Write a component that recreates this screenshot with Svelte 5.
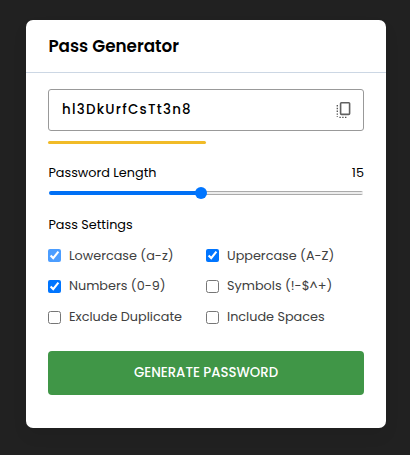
<script>
  let length = $state(15);
  let options = $state([
    { id: 'lower', label: 'Lowercase (a-z)', checked: true, soft: true },
    { id: 'upper', label: 'Uppercase (A-Z)', checked: true },
    { id: 'numbers', label: 'Numbers (0-9)', checked: true },
    { id: 'symbols', label: 'Symbols (!-$^+)', checked: false },
    { id: 'exclude', label: 'Exclude Duplicate', checked: false },
    { id: 'spaces', label: 'Include Spaces', checked: false }
  ]);
  const fill = $derived(((length - 1) / 29) * 100);
</script>

<main>
  <section class="card">
    <h1>Pass Generator</h1>
    <div class="body">
      <div class="field">
        <span class="password">hl3DkUrfCsTt3n8</span>
        <svg class="copy" width="15" height="18" viewBox="0 0 15 18" fill="none">
          <rect x="4.6" y="1.75" width="9" height="11.6" rx="0.8" stroke="#606060" stroke-width="1.6" />
          <path d="M1.3 4v12" stroke="#505050" stroke-width="1.3" stroke-dasharray="1.4 1.4" />
          <path d="M3.4 16.3h8" stroke="#505050" stroke-width="1.3" stroke-dasharray="1.4 1.4" />
        </svg>
      </div>
      <div class="strength"></div>
      <div class="length-row">
        <label for="length">Password Length</label>
        <span>{length}</span>
      </div>
      <input id="length" class="range" type="range" min="1" max="30" bind:value={length} style:--fill="{fill}%" />
      <p class="title">Pass Settings</p>
      <div class="options">
        {#each options as o (o.id)}
          <label class="option" class:soft={o.soft}>
            <input type="checkbox" bind:checked={o.checked} />
            <span>{o.label}</span>
          </label>
        {/each}
      </div>
      <button>GENERATE PASSWORD</button>
    </div>
  </section>
</main>

<style>
  :global(body) { background: #212121; }
  main {
    height: 455px;
    box-sizing: border-box;
    padding: 20px 24px 0 26px;
    background: #212121;
    font-family: Poppins, Inter, sans-serif;
    color: #000;
  }
  .card {
    height: 408px;
    border-radius: 7px;
    background: #fff;
    box-shadow: 0 8px 16px rgba(0, 0, 0, 0.06);
  }
  h1 {
    box-sizing: border-box;
    height: 53px;
    margin: 0;
    padding-left: 22.4px;
    border-bottom: 1px solid #ccd7e4;
    font-size: 16.8px;
    line-height: 53px;
    font-weight: 600;
  }
  .body {
    display: flex;
    flex-direction: column;
    padding: 16px 22px 0;
  }
  .field {
    box-sizing: border-box;
    height: 42px;
    display: flex;
    align-items: center;
    justify-content: space-between;
    padding: 0 12px 0 13px;
    border: 1px solid #999;
    border-radius: 3px;
  }
  .password {
    font-size: 13.4px;
    font-weight: 500;
    letter-spacing: 1.25px;
  }
  .copy { display: block; }
  .strength {
    width: 158px;
    height: 3px;
    margin-top: 10px;
    border-radius: 2px;
    background: #f1bb28;
  }
  .length-row {
    display: flex;
    justify-content: space-between;
    height: 20px;
    margin-top: 19px;
    padding-left: 0.4px;
    font-size: 12.8px;
    line-height: 20px;
  }
  .range {
    appearance: none;
    width: 316px;
    height: 12px;
    margin: 4px 0 0;
    background: transparent;
  }
  .range::-webkit-slider-runnable-track {
    box-sizing: border-box;
    height: 4px;
    margin: 0 1px;
    border-radius: 2px;
    background: linear-gradient(to right, #0070f5 var(--fill), transparent var(--fill)),
      linear-gradient(#aaa 0 1px, #ececec 1px 3px, #aaa 3px 4px);
  }
  .range::-webkit-slider-thumb {
    appearance: none;
    width: 12px;
    height: 12px;
    margin-top: -4px;
    border-radius: 50%;
    background: #0075ff;
  }
  .title {
    margin: 16px 0 0;
    height: 20px;
    padding-left: 0.4px;
    font-size: 12.8px;
    line-height: 20px;
  }
  .options {
    display: grid;
    grid-template-columns: 158px 158px;
    grid-auto-rows: 30.8px;
    margin-top: 5.3px;
  }
  .option {
    display: flex;
    align-items: center;
    gap: 8px;
    color: #404040;
    font-size: 12.8px;
    white-space: nowrap;
  }
  .option input {
    width: 13px;
    height: 13px;
    margin: 0;
  }
  .soft input { opacity: 0.7; }
  button {
    height: 44px;
    margin: 18.3px 0 0;
    padding: 0;
    border: 0;
    border-radius: 4px;
    background: #409647;
    color: #fff;
    font: inherit;
    font-size: 13.3px;
    font-weight: 500;
  }
</style>
